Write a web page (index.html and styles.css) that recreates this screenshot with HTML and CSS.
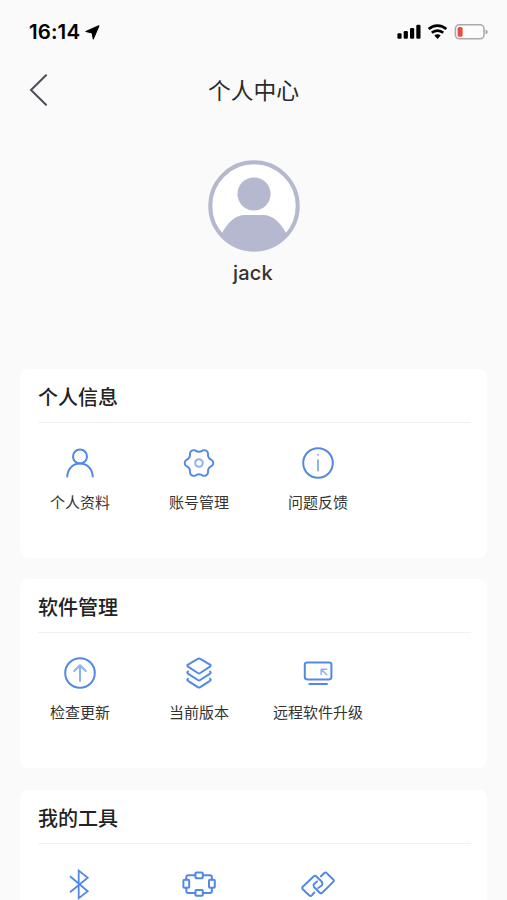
FILE: index.html
```html
<!DOCTYPE html>
<html lang="zh-CN">
<head>
<meta charset="utf-8">
<title>个人中心</title>
<link rel="stylesheet" href="styles.css">
</head>
<body>
<div class="status">
  <span class="time">16:14</span>
  <svg class="loc" width="15" height="15" viewBox="0 0 15 15"><path d="M13.8.9 1 6.5 7.2 7.8 8.3 13.8Z"/></svg>
  <svg class="sys" width="92" height="18" viewBox="0 0 92 18">
    <g><rect x=".4" y="10.2" width="4.2" height="5.6" rx="1.2"/><rect x="6.7" y="8" width="4.2" height="7.8" rx="1.2"/><rect x="13" y="5" width="4.2" height="10.8" rx="1.2"/><rect x="19.3" y="1.7" width="4.2" height="14.1" rx="1.2"/></g>
    <g class="wifi"><path d="M31.7 6.1a13 13 0 0 1 17.6 0"/><path d="M34.8 9.8a8.4 8.4 0 0 1 11.4 0"/></g>
    <path d="M37.3 12.6a5 5 0 0 1 6.4 0L40.5 16Z"/>
    <rect class="shell" x="58.4" y="1.8" width="28.6" height="14" rx="4"/>
    <rect class="charge" x="60.6" y="4" width="5" height="9.8" rx="1.5"/>
    <path class="cap" d="M88.5 6.5q2.4.6 2.4 2.4T88.5 11.3Z"/>
  </svg>
</div>
<header class="nav">
  <svg width="20" height="32" viewBox="0 0 20 32"><path d="M17 1.2 2 16 17 30.8"/></svg>
  <h1>个人中心</h1>
</header>
<section class="profile">
  <svg width="92" height="92" viewBox="-46 -46 92 92">
    <circle class="face" r="44"/>
    <circle class="fill" cy="-12" r="16.6"/>
    <path class="fill" d="M-32.5 28C-27 17-19 9-9 9H9C19 9 27 17 32.5 28A44 44 0 0 1-32.5 28Z"/>
    <circle class="ring" r="43.7"/>
  </svg>
  <div class="name">jack</div>
</section>
<main>
  <section class="card">
    <h2>个人信息</h2>
    <div class="grid">
      <div class="item">
        <svg class="icon" viewBox="-18 -18 36 36"><circle cy="-6.5" r="7"/><path d="M-12.7 13.4V12.8C-12.2 5.6-6.8.5 0 .5S12.2 5.6 12.7 12.8v.6"/></svg>
        <span>个人资料</span>
      </div>
      <div class="item">
        <svg class="icon" viewBox="-18 -18 36 36"><path d="M13.25 3.06A6.6 6.6 0 0 0 9.28 9.95A3.9 3.9 0 0 1 3.98 13A6.6 6.6 0 0 0-3.98 13A3.9 3.9 0 0 1-9.28 9.95A6.6 6.6 0 0 0-13.25 3.06A3.9 3.9 0 0 1-13.25-3.06A6.6 6.6 0 0 0-9.28-9.95A3.9 3.9 0 0 1-3.98-13A6.6 6.6 0 0 0 3.98-13A3.9 3.9 0 0 1 9.28-9.95A6.6 6.6 0 0 0 13.25-3.06A3.9 3.9 0 0 1 13.25 3.06Z" transform="scale(.97)"/><circle class="soft" r="3.8"/></svg>
        <span>账号管理</span>
      </div>
      <div class="item">
        <svg class="icon" viewBox="-18 -18 36 36"><circle r="14.8"/><path class="soft" d="M0-2.8V7.5M0-8.3V-8.2"/></svg>
        <span>问题反馈</span>
      </div>
    </div>
  </section>
  <section class="card">
    <h2>软件管理</h2>
    <div class="grid">
      <div class="item">
        <svg class="icon" viewBox="-18 -18 36 36"><circle r="14.8"/><path class="soft" d="M0 8V-7.5M-5.7-2 0-7.7 5.7-2"/></svg>
        <span>检查更新</span>
      </div>
      <div class="item">
        <svg class="icon" viewBox="-18 -18 36 36"><path d="M-1.2-14.2Q0-15 1.2-14.2L11-8.4Q12.4-7.4 11-6.4L1.2 0Q0 .8-1.2 0L-11-6.4Q-12.4-7.4-11-8.4ZM-11-1.4Q-12.4-.4-11 .6L-1.2 7Q0 7.8 1.2 7L11 .6Q12.4-.4 11-1.4M-11 5.8Q-12.4 6.8-11 7.8L-1.2 14.2Q0 15 1.2 14.2L11 7.8Q12.4 6.8 11 5.8"/></svg>
        <span>当前版本</span>
      </div>
      <div class="item">
        <svg class="icon" viewBox="-18 -18 36 36"><rect x="-13.2" y="-10.5" width="26.6" height="16.9" rx="2.3"/><path d="M-8.7 11H9"/><path class="soft thin" d="M3.2 1.5V-3.8H8.7M3.7-3.3 8.8 1.8"/></svg>
        <span>远程软件升级</span>
      </div>
    </div>
  </section>
  <section class="card last">
    <h2>我的工具</h2>
    <div class="grid">
      <div class="item">
        <svg class="icon" viewBox="-18 -18 36 36"><path class="miter" d="M-10-7.7 7.7 7.3-1.3 14.2V-13.5L7.7-6.3-10 8.3"/></svg>
      </div>
      <div class="item">
        <svg class="icon" viewBox="-18 -18 36 36"><path d="M-3.6-8.7H-10.8Q-12.7-8.7-12.7-6.8V-4.2M3.8-8.7H11Q12.9-8.7 12.9-6.8V-4.2M-12.7 3.8V7Q-12.7 8.9-10.8 8.9H-3.6M12.9 3.8V7Q12.9 8.9 11 8.9H3.8"/><rect x="-3.6" y="-11.6" width="7.4" height="5.8" rx="1"/><rect x="-3.6" y="6" width="7.4" height="5.8" rx="1"/><rect x="-15.6" y="-4.2" width="5.8" height="8" rx="1"/><rect x="10" y="-4.2" width="5.8" height="8" rx="1"/></svg>
      </div>
      <div class="item">
        <svg class="icon" viewBox="-18 -18 36 36"><path d="M-3.7 8.5-6.2 11.4Q-7.4 12.6-8.6 11.4L-15.2 5.2Q-16.4 4-15.2 2.8L-4.2-7.7Q-3-8.9-1.8-7.7L3.8-2.2Q5 0 3.8 1.5L.2 4M3-7.8 6.3-10.9Q7.5-12.1 8.7-10.9L15.2-4.5Q16.4-3.3 15.2-2.1L4.2 8.7Q3 9.9 1.8 8.7L-4 3Q-5.2 1.4-4-.1L-1-2.6"/></svg>
      </div>
    </div>
  </section>
</main>
</body>
</html>
```
FILE: styles.css
```css
* { box-sizing: border-box; }
body {
  display: flex;
  flex-direction: column;
  margin: 0;
  height: 900px;
  overflow: hidden;
  background: #fafafa;
  color: #2b2b2b;
  font-family: Inter, "Noto Sans CJK SC", sans-serif;
}
svg { display: block; flex: none; }
h1, h2 { margin: 0; font-weight: 500; }
.status {
  display: flex;
  flex: none;
  align-items: center;
  height: 64px;
  padding: 0 18px 0 29px;
  color: #000;
}
.time { width: 56px; font-size: 20.5px; line-height: 24px; font-weight: 600; letter-spacing: 0.1px; padding-bottom: 1px; }
.loc { stroke: #000; stroke-width: 1.2; stroke-linejoin: round; }
.sys { margin-left: auto; }
.wifi { fill: none; stroke: #000; stroke-width: 2.7; }
.shell { fill: #fdfdfd; stroke: #aaa; stroke-width: 1.6; }
.charge { fill: #e84e40; }
.cap { fill: #aaa; }
.nav {
  display: grid;
  flex: none;
  grid-template-columns: 40px 1fr 40px;
  align-items: center;
  height: 52px;
  padding: 0 29px;
}
.nav svg { fill: none; stroke: #4c4d57; stroke-width: 2; stroke-linecap: round; }
.nav h1 { padding-top: 2px; text-align: center; font-size: 22.8px; font-weight: 400; line-height: 34px; }
.profile {
  display: flex;
  flex: none;
  flex-direction: column;
  align-items: center;
  height: 253px;
  padding-top: 44px;
}
.face { fill: #fff; }
.fill { fill: #b5b8cf; }
.ring { fill: none; stroke: #b5b8cf; stroke-width: 4; }
.name { margin: 7px 1px 0 0; font-size: 20px; line-height: 28px; font-weight: 450; letter-spacing: 0.2px; color: #333; }
main {
  display: flex;
  flex: 1;
  flex-direction: column;
  gap: 21.3px;
  min-height: 0;
  padding: 0 20px;
}
.card {
  flex: none;
  height: 189px;
  background: #fff;
  border-radius: 8px;
}
.last { flex: 1; height: auto; min-height: 0; border-radius: 8px 8px 0 0; }
.card h2 {
  height: 54px;
  margin: 0 16px 0 18px;
  padding-top: 2px;
  border-bottom: 1px solid #f0f0f0;
  font-size: 20px;
  line-height: 55px;
  color: #222;
}
.grid {
  display: grid;
  grid-template-columns: repeat(3, 119px);
  padding: 22px 0 0 0.4px;
}
.item {
  display: flex;
  flex-direction: column;
  align-items: center;
  gap: 9.5px;
  font-size: 15px;
  line-height: 24px;
  white-space: nowrap;
  color: #333;
}
.icon {
  width: 36px;
  height: 36px;
  fill: none;
  stroke: #5289e5;
  stroke-width: 2;
  stroke-linecap: round;
  stroke-linejoin: round;
}
.soft { stroke: #8eb1f0; }
.thin { stroke-width: 1.5; }
.miter { stroke-width: 1.8; stroke-linejoin: miter; stroke-linecap: butt; }
```
